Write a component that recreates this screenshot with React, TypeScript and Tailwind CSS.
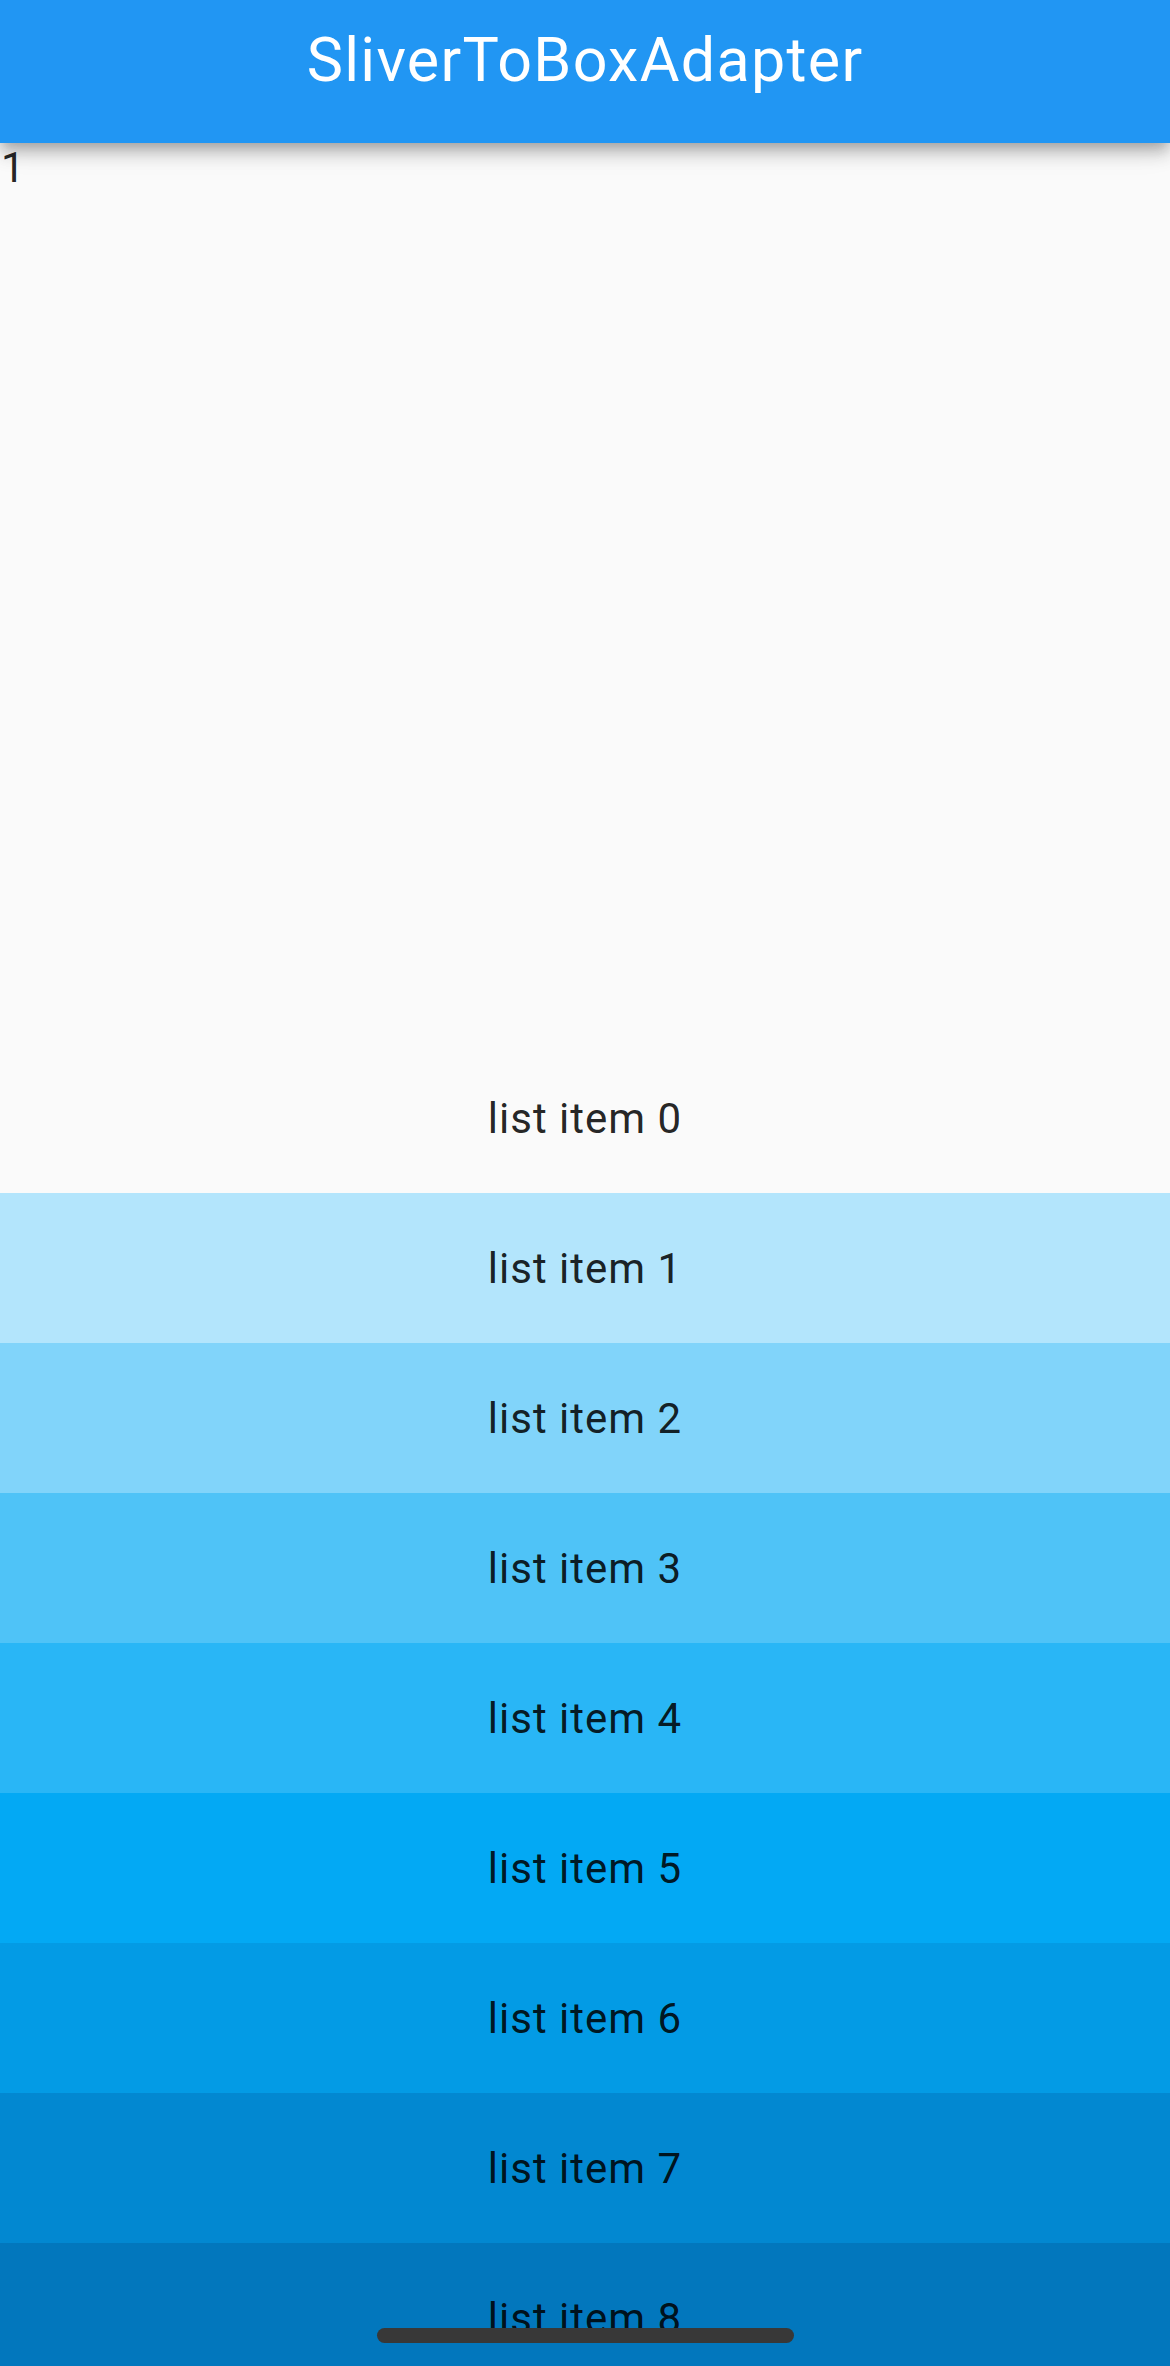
import React from "react";

const items = [
  { label: "list item 0", bg: "bg-transparent" },
  { label: "list item 1", bg: "bg-[#B3E5FC]" },
  { label: "list item 2", bg: "bg-[#81D4FA]" },
  { label: "list item 3", bg: "bg-[#4FC3F7]" },
  { label: "list item 4", bg: "bg-[#29B6F6]" },
  { label: "list item 5", bg: "bg-[#03A9F4]" },
  { label: "list item 6", bg: "bg-[#039BE5]" },
  { label: "list item 7", bg: "bg-[#0288D1]" },
  { label: "list item 8", bg: "bg-[#0277BD]" },
];

export default function App() {
  return (
    <div
      className="relative w-[1170px] h-[2366px] overflow-hidden bg-[#FAFAFA]"
      style={{ fontFamily: "Roboto, 'Noto Sans', sans-serif" }}
    >
      <header className="relative z-10 h-[143px] bg-[#2196F3] flex justify-center pt-[30px] shadow-[0_6px_12px_-3px_rgba(0,0,0,0.2),0_12px_15px_0_rgba(0,0,0,0.14),0_3px_30px_0_rgba(0,0,0,0.12)]">
        <h1 className="text-white text-[61px] leading-[60px] font-normal tracking-[1.3px]">
          SliverToBoxAdapter
        </h1>
      </header>
      <div className="h-[900px] text-[42px] leading-[49px] text-[rgba(0,0,0,0.87)] pl-[1px]">
        1
      </div>
      <div className="flex flex-col">
        {items.map((it) => (
          <div
            key={it.label}
            className={`h-[150px] shrink-0 flex items-center justify-center ${it.bg}`}
          >
            <span className="text-[42px] leading-[49px] tracking-[1px] text-[rgba(0,0,0,0.87)]">
              {it.label}
            </span>
          </div>
        ))}
      </div>
      <div className="absolute left-[377px] top-[2328px] w-[417px] h-[15px] rounded-full bg-[#383838]" />
    </div>
  );
}
